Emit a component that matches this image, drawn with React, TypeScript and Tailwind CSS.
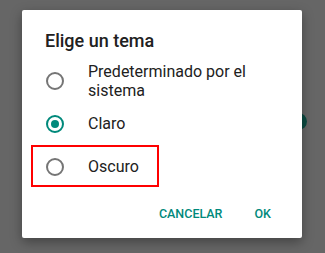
import React from "react";

function Radio({ checked }: { checked?: boolean }) {
  return (
    <div
      className={
        "w-[18px] h-[18px] rounded-full border-2 flex items-center justify-center shrink-0 " +
        (checked ? "border-[#00897b]" : "border-[#757575]")
      }
    >
      {checked && <div className="w-[8px] h-[8px] rounded-full bg-[#00897b]" />}
    </div>
  );
}

export default function App() {
  return (
    <div
      className="w-[325px] h-[253px] bg-[#666666] relative overflow-hidden pt-[10px] pl-[22px]"
      style={{ fontFamily: "Roboto, 'Noto Sans', sans-serif" }}
    >
      <div className="absolute left-[290px] top-[113px] w-[17px] h-[17px] rounded-full bg-[#0b4a41]" />
      <div className="relative w-[280px] h-[228px] bg-white rounded-[2px] shadow-[0_4px_12px_rgba(0,0,0,0.35)] flex flex-col">
        <div className="pl-[23px] pt-[19px] h-[49px] text-[18px] leading-[24px] font-medium text-[#212121]">
          Elige un tema
        </div>
        <div className="flex flex-col">
          <div className="h-[43px] flex items-center pl-[24px]">
            <Radio />
            <div className="ml-[24px] text-[16px] leading-[19px] text-[#212121]">
              Predeterminado por el
              <br />
              sistema
            </div>
          </div>
          <div className="h-[43px] flex items-center pl-[24px]">
            <Radio checked />
            <div className="ml-[24px] text-[16px] leading-[19px] text-[#212121]">Claro</div>
          </div>
          <div className="h-[43px] flex items-center pl-[24px] relative">
            <Radio />
            <div className="ml-[24px] text-[16px] leading-[19px] text-[#212121]">Oscuro</div>
            <div className="absolute left-[9px] top-0 w-[128px] h-[42px] border-2 border-[#ff0000]" />
          </div>
        </div>
        <div className="flex justify-end items-center gap-[32px] pr-[31px] mt-[17px]">
          <span className="text-[12.5px] font-medium text-[#00897b]">CANCELAR</span>
          <span className="text-[12.5px] font-medium text-[#00897b]">OK</span>
        </div>
      </div>
    </div>
  );
}
